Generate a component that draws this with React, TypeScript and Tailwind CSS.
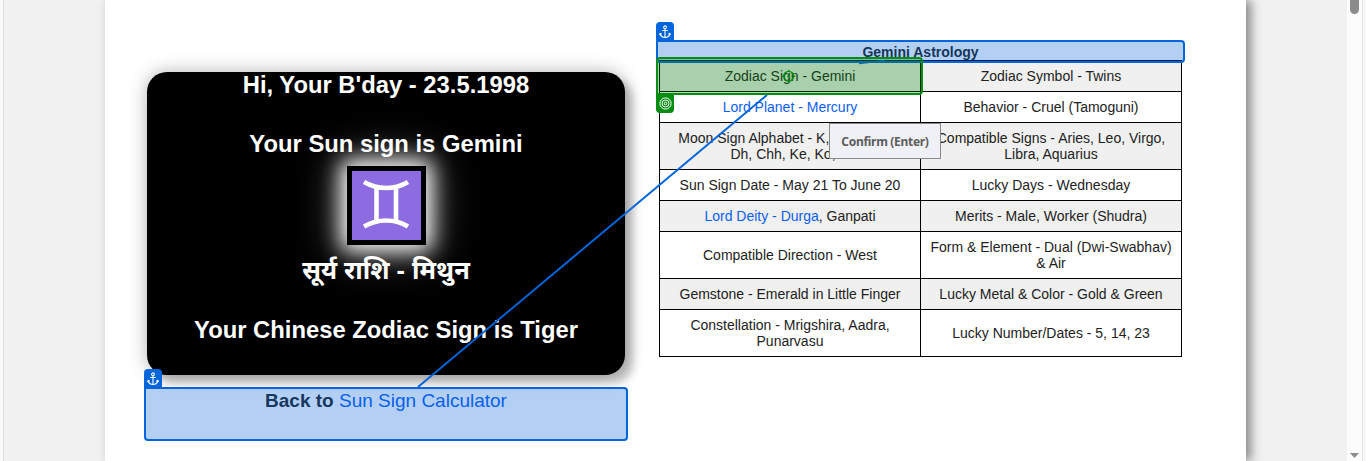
import React from "react";

const rows: { h: string; left: React.ReactNode; right: React.ReactNode }[] = [
  { h: "h-[31px]", left: "Zodiac Sign - Gemini", right: "Zodiac Symbol - Twins" },
  { h: "h-[31px]", left: <span className="text-[#0d5ef4]">Lord Planet - Mercury</span>, right: "Behavior - Cruel (Tamoguni)" },
  { h: "h-[47px]", left: <>Moon Sign Alphabet - K, Ki, Gh, Ng,<br />Dh, Chh, Ke, Ko, H</>, right: <>Compatible Signs - Aries, Leo, Virgo,<br />Libra, Aquarius</> },
  { h: "h-[31px]", left: "Sun Sign Date - May 21 To June 20", right: "Lucky Days - Wednesday" },
  { h: "h-[31px]", left: <><span className="text-[#0d5ef4]">Lord Deity - Durga</span>, Ganpati</>, right: "Merits - Male, Worker (Shudra)" },
  { h: "h-[47px]", left: "Compatible Direction - West", right: <>Form &amp; Element - Dual (Dwi-Swabhav)<br />&amp; Air</> },
  { h: "h-[31px]", left: "Gemstone - Emerald in Little Finger", right: "Lucky Metal & Color - Gold & Green" },
  { h: "h-[47px]", left: <>Constellation - Mrigshira, Aadra,<br />Punarvasu</>, right: "Lucky Number/Dates - 5, 14, 23" },
];

function AnchorBadge() {
  return (
    <span className="flex h-[19px] w-[18px] items-center justify-center rounded-t-[4px] bg-[#0265dc]">
      <svg width="12" height="14" viewBox="0 0 12 14" fill="none" stroke="#fff" strokeWidth="1.1">
        <circle cx="6" cy="2.3" r="1.4" />
        <path d="M6 3.7V12.2M3.2 5.5h5.600M1.2 8.800c.4 2.200 2 3.500 4.800 3.600 2.800-.1 4.400-1.400 4.800-3.600M.5 10l.7-1.700 1.500 1M11.500 10l-.7-1.700-1.500 1" />
      </svg>
    </span>
  );
}

function GeminiGlyph() {
  return (
    <svg className="mx-auto block h-[79px] w-[79px] shadow-[0_0_20px_5px_#fff,0_0_40px_8px_rgba(255,255,255,0.4)]" viewBox="0 0 79 79">
      <rect width="79" height="79" fill="#000" />
      <rect x="5" y="5" width="69" height="69" fill="#8c6ce0" />
      <g fill="none" stroke="#fff" strokeWidth="4.600">
        <path d="M17 16C31 24 48 24 61 16M17 60.500C31 52.500 48 52.500 61 60.500M29.500 21V55.500M49 21V55.500" />
      </g>
    </svg>
  );
}

export default function App() {
  return (
    <div className="relative flex h-[461px] w-[1366px] overflow-hidden bg-[#f1f1f1] font-['Liberation_Sans',Arial,sans-serif] text-[#212529]">
      <div className="w-1 shrink-0 border-r border-[#e0e0e0] bg-[#f9f9f9]" />
      <div className="flex w-[1343px] shrink-0 overflow-hidden pl-[101px]">
        <main className="flex w-[1141px] shrink-0 items-start bg-white shadow-[5px_0_10px_#888]">
          <section className="ml-[42px] mt-[72px] w-[478px]">
            <div className="flex h-[303px] flex-col rounded-[20px] bg-black text-center text-[23.8px] font-bold leading-[29px] text-white shadow-[8px_8px_8px_rgba(0,0,0,0.22),0_0_18px_rgba(0,0,0,0.3)]">
              <div className="-mt-[2px] h-[29px]">Hi, Your B'day - 23.5.1998</div>
              <div className="mt-[30px] h-[29px]">Your Sun sign is Gemini</div>
              <div className="mt-[8px]"><GeminiGlyph /></div>
              <div className="mt-[11px] h-[29px] font-['Liberation_Sans','Noto_Sans',sans-serif] text-[25.4px]">सूर्य राशि - मिथुन</div>
              <div className="mt-[30px] h-[29px]">Your Chinese Zodiac Sign is Tiger</div>
            </div>
            <div className="mt-[14px] text-center text-[19px] leading-[23px]">
              <b>Back to</b> <span className="text-[#0d5ef4]">Sun Sign Calculator</span>
            </div>
          </section>
          <section className="ml-[34px] mt-[43px] w-[523px] text-center text-[14px] leading-4 text-[#222]">
            <h2 className="h-[17px] pt-px text-[14px] font-bold leading-4">Gemini Astrology</h2>
            <div className="border-l border-t border-black">
              {rows.map((row, i) => (
                <div key={i} className={`flex ${row.h} ${i % 2 ? "bg-white" : "bg-[#f0f0f0]"}`}>
                  <div className="flex w-[261px] items-center justify-center border-b border-r border-black"><div className="whitespace-nowrap">{row.left}</div></div>
                  <div className="flex w-[261px] items-center justify-center border-b border-r border-black"><div className="whitespace-nowrap">{row.right}</div></div>
                </div>
              ))}
            </div>
          </section>
        </main>
      </div>
      <div className="flex w-4 shrink-0 flex-col items-center justify-between border-r border-[#e2e2e2] bg-[#fcfcfc]">
        <div className="h-[14px] w-[9px] rounded-b-full bg-[#8b8b8b]" />
        <svg className="mb-[3px]" width="9" height="5" viewBox="0 0 9 5"><path d="M0 0h9L4.500 5z" fill="#8b8b8b" /></svg>
      </div>
      <div className="grow bg-[#f8f8f8]" />

      <div className="absolute left-[656px] top-[40px] h-[23px] w-[529px] rounded-[4px] rounded-tl-none border-2 border-[#0265dc] bg-[#0265dc]/30" />
      <div className="absolute left-[656px] top-[22px]"><AnchorBadge /></div>
      <div className="absolute left-[144px] top-[387px] h-[54px] w-[484px] rounded-[4px] rounded-tl-none border-2 border-[#0265dc] bg-[#0265dc]/30" />
      <div className="absolute left-[144px] top-[369px]"><AnchorBadge /></div>
      <svg className="pointer-events-none absolute left-0 top-0" width="1366" height="461">
        <path d="M418 387L767 95" stroke="#0265dc" strokeWidth="2" fill="none" />
        <path d="M859 63.500L885 60.500" stroke="#0265dc" strokeWidth="1.500" fill="none" />
      </svg>
      <div className="absolute left-[656px] top-[57px] h-[38px] w-[267px] rounded-[4px] rounded-bl-none border-2 border-[#078d12] bg-[#078812]/30" />
      <span className="absolute left-[656px] top-[94px] flex h-[19px] w-[18px] items-center justify-center rounded-b-[4px] bg-[#078d12]">
        <svg width="13" height="13" viewBox="0 0 13 13" fill="none" stroke="#fff" strokeWidth="1">
          <circle cx="6.500" cy="6.500" r="5.600" /><circle cx="6.500" cy="6.500" r="3.500" /><circle cx="6.500" cy="6.500" r="1.300" />
        </svg>
      </span>
      <svg className="absolute left-[781px] top-[69px]" width="15" height="15" viewBox="0 0 15 15" fill="none" stroke="#078d12" strokeWidth="1.400">
        <circle cx="7.700" cy="7.300" r="4.900" /><circle cx="7.700" cy="7.300" r="1.400" fill="#078d12" stroke="none" />
        <path d="M7.700 .8v1.800M7.700 12v1.800M1.200 7.300h1.800M12.400 7.300h1.800" />
      </svg>
      <div className="absolute left-[829px] top-[123px] flex h-[36px] w-[112px] items-center justify-center border border-[#8a8a8a] bg-[#f0f0f7] pt-px font-['Noto_Sans',sans-serif] text-[12px] font-bold tracking-[-0.3px] text-[#5d5d5d]">
        <span className="whitespace-nowrap">Confirm (Enter)</span>
      </div>
    </div>
  );
}
